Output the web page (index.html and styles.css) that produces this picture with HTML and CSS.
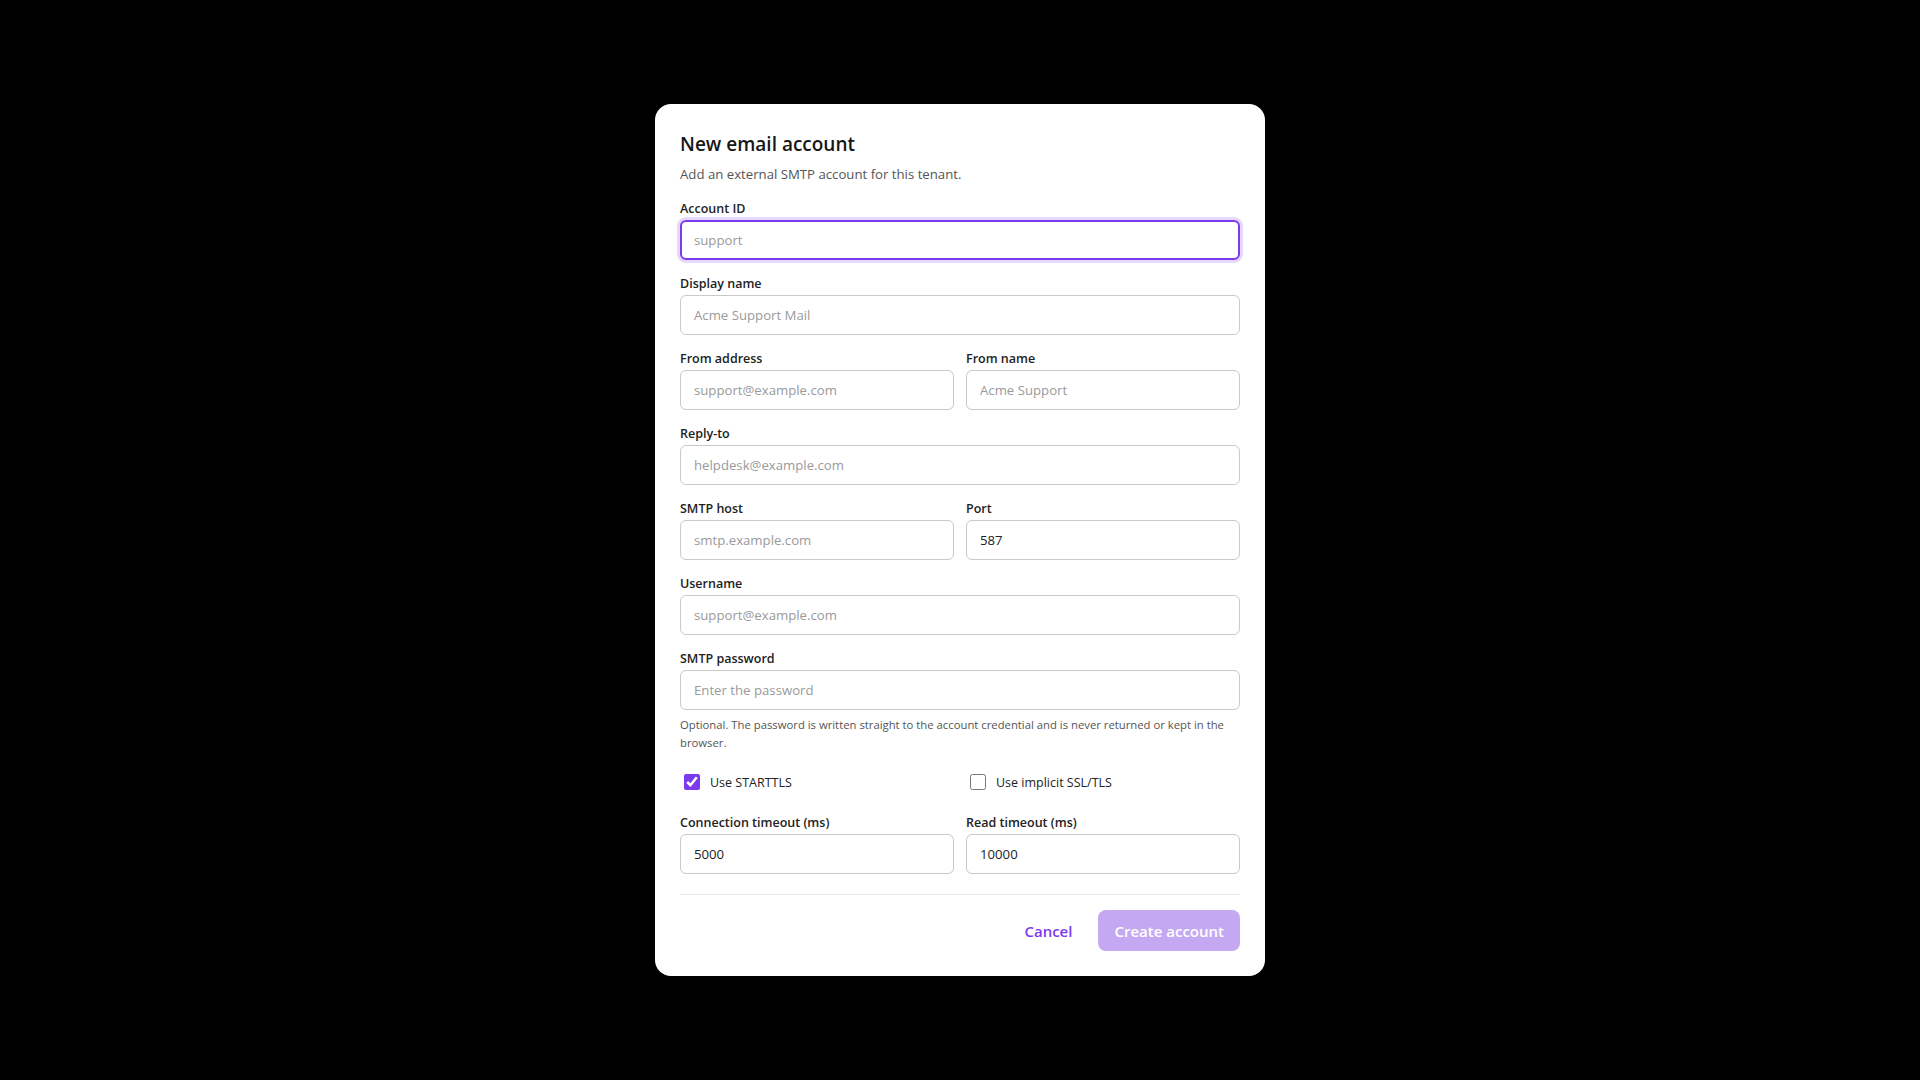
FILE: index.html
```html
<!DOCTYPE html>
<html lang="en">
<head>
<meta charset="utf-8">
<title>New email account</title>
<link rel="stylesheet" href="styles.css">
</head>
<body>
<div class="overlay">
  <div class="dialog">
    <h1 class="title">New email account</h1>
    <p class="subtitle">Add an external SMTP account for this tenant.</p>
    <form class="form">
      <div class="field">
        <label class="label">Account ID</label>
        <input class="input focused" placeholder="support">
      </div>
      <div class="field">
        <label class="label">Display name</label>
        <input class="input" placeholder="Acme Support Mail">
      </div>
      <div class="row">
        <div class="field">
          <label class="label">From address</label>
          <input class="input" placeholder="support@example.com">
        </div>
        <div class="field">
          <label class="label">From name</label>
          <input class="input" placeholder="Acme Support">
        </div>
      </div>
      <div class="field">
        <label class="label">Reply-to</label>
        <input class="input" placeholder="helpdesk@example.com">
      </div>
      <div class="row">
        <div class="field">
          <label class="label">SMTP host</label>
          <input class="input" placeholder="smtp.example.com">
        </div>
        <div class="field">
          <label class="label">Port</label>
          <input class="input" value="587">
        </div>
      </div>
      <div class="field">
        <label class="label">Username</label>
        <input class="input" placeholder="support@example.com">
      </div>
      <div class="field">
        <label class="label">SMTP password</label>
        <input class="input" type="password" placeholder="Enter the password">
        <p class="help">Optional. The password is written straight to the account credential and is never returned or kept in the browser.</p>
      </div>
      <div class="row checks">
        <label class="check"><input type="checkbox" class="box" checked><span>Use STARTTLS</span></label>
        <label class="check"><input type="checkbox" class="box"><span>Use implicit SSL/TLS</span></label>
      </div>
      <div class="row">
        <div class="field">
          <label class="label">Connection timeout (ms)</label>
          <input class="input" value="5000">
        </div>
        <div class="field">
          <label class="label">Read timeout (ms)</label>
          <input class="input" value="10000">
        </div>
      </div>
      <div class="footer">
        <button type="button" class="btn-link">Cancel</button>
        <button type="button" class="btn-primary">Create account</button>
      </div>
    </form>
  </div>
</div>
</body>
</html>
```
FILE: styles.css
```css
* { box-sizing: border-box; }
html, body { margin: 0; padding: 0; }
body {
  background: #000;
  font-family: "Open Sans", "Noto Sans", sans-serif;
  color: #1f1f1f;
}
.overlay {
  width: 1920px;
  height: 1080px;
  display: flex;
  align-items: center;
  justify-content: center;
}
.dialog {
  width: 610px;
  background: #fff;
  border-radius: 16px;
  padding: 25px 25px 25px 25px;
}
.title {
  margin: 0;
  font-size: 19px;
  line-height: 30px;
  font-weight: 600;
  color: #161616;
}
.subtitle {
  margin: 5px 0 0;
  font-size: 13.2px;
  line-height: 20px;
  color: #555;
}
.form {
  margin-top: 14px;
  display: flex;
  flex-direction: column;
  gap: 13px;
}
.field {
  display: flex;
  flex-direction: column;
  min-width: 0;
}
.label {
  font-size: 12.5px;
  line-height: 20px;
  font-weight: 600;
  color: #222;
  padding-top: 1px;
  margin-bottom: 1px;
}
.input {
  height: 40px;
  width: 100%;
  border: 1px solid #c9c9c9;
  border-radius: 6px;
  padding: 0 13px;
  font-family: inherit;
  font-size: 13.2px;
  color: #222;
  background: #fff;
  outline: none;
}
.input::placeholder { color: #9a9a9a; }
.input.focused {
  border: 2px solid #7c3aed;
  padding: 0 12px;
  box-shadow: 0 0 0 3px #e4d8fb;
}
.row {
  display: grid;
  grid-template-columns: 1fr 1fr;
  gap: 12px;
}
.help {
  margin: 6px 0 0;
  font-size: 11.3px;
  line-height: 18px;
  color: #555;
}
.checks {
  padding: 7px 0;
}
.check {
  display: flex;
  align-items: center;
  height: 20px;
  font-size: 12.5px;
  color: #222;
}
.box {
  width: 16px;
  height: 16px;
  margin: 0 10px 0 4px;
  accent-color: #7c3aed;
}
.footer {
  margin-top: 7px;
  border-top: 1px solid #e6e6e6;
  padding-top: 15px;
  display: flex;
  justify-content: flex-end;
  align-items: center;
  gap: 26px;
}
.btn-link {
  background: none;
  border: none;
  padding: 0;
  font-family: inherit;
  font-size: 15px;
  font-weight: 600;
  color: #7c3aed;
}
.btn-primary {
  height: 41px;
  padding: 0 16px;
  border: none;
  border-radius: 8px;
  background: #c4a9f2;
  color: #fff;
  font-family: inherit;
  font-size: 15px;
  font-weight: 600;
}
```
